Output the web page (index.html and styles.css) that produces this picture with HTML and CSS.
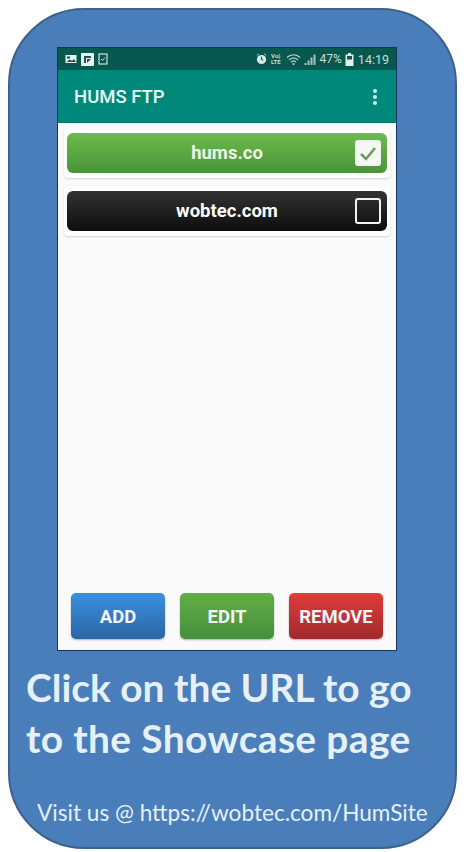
FILE: index.html
```html
<!DOCTYPE html>
<html lang="en">
<head>
<meta charset="utf-8">
<title>HUMS FTP</title>
<link rel="stylesheet" href="styles.css">
</head>
<body>
<main class="card">
  <section class="phone">
    <div class="status">
      <div class="status-group">
        <svg class="ic" width="12" height="10" viewBox="0 0 12 10"><rect x="0.5" y="1" width="11" height="8" fill="#e3f0ec"/><rect x="2" y="2.5" width="3" height="2" fill="#0a5a50"/><path d="M1.5 8 5 5.5 7 7l2-2 2 3z" fill="#0a5a50"/></svg>
        <svg class="ic" width="13" height="13" viewBox="0 0 13 13"><rect width="13" height="13" rx="1" fill="#e9f3f0"/><path d="M3 3h7v2H5v5H3z" fill="#24544c"/><path d="M6 10V6h4z" fill="#24544c"/></svg>
        <svg class="ic" width="10" height="12" viewBox="0 0 10 12"><rect x="1" y="1" width="8" height="10" fill="none" stroke="#cfe3de" stroke-width="1.2"/><path d="M3 6l1.5 1.5L7 4.5" fill="none" stroke="#cfe3de"/></svg>
      </div>
      <div class="status-group right">
        <svg class="ic" width="11" height="12" viewBox="0 0 12 12"><circle cx="6" cy="6.5" r="5" fill="#dcebe7"/><path d="M6 3.5v3l2 1" fill="none" stroke="#0a5a50" stroke-width="1.2"/><path d="M1 2l2-1.500M11 2 9 .5" stroke="#dcebe7"/></svg>
        <span class="lte">Vo)<br>LTE</span>
        <svg class="ic wifi" width="15" height="11" viewBox="0 0 15 11"><path d="M1 3.500a9 9 0 0 1 13 0M3 6a6 6 0 0 1 9 0M5 8.200a3 3 0 0 1 5 0" fill="none" stroke="#c3dcd6" stroke-width="1.100"/><circle cx="7.500" cy="10" r="1" fill="#c3dcd6"/></svg>
        <svg class="ic" width="12" height="11" viewBox="0 0 11 11"><path d="M0 9h2v2H0zM3 6.500h2V11H3zM6 3.500h2V11H6zM9 .5h2V11H9z" fill="#9fc6bd"/></svg>
        <span class="pct">47%</span>
        <svg class="ic" width="9" height="13" viewBox="0 0 8 13"><path d="M2.500 0h3v1.500H8V13H0V1.500h2.500z" fill="#e3f0ec"/><rect x="1.500" y="3" width="5" height="3.500" fill="#0a5a50"/></svg>
        <span class="time">14:19</span>
      </div>
    </div>
    <header class="appbar">
      <h1 class="title">HUMS FTP</h1>
      <div class="menu"><i></i><i></i><i></i></div>
    </header>
    <div class="content">
      <ul class="list">
        <li class="row">
          <a class="site site-green"><span>hums.co</span>
            <span class="check checked"><svg width="18" height="15" viewBox="0 0 18 15"><path d="M2 8l5 5L16 2" fill="none" stroke="#6f9468" stroke-width="2.500"/></svg></span>
          </a>
        </li>
        <li class="row">
          <a class="site site-black"><span>wobtec.com</span><span class="check"></span></a>
        </li>
      </ul>
      <div class="actions">
        <button class="btn btn-blue">ADD</button>
        <button class="btn btn-green">EDIT</button>
        <button class="btn btn-red">REMOVE</button>
      </div>
    </div>
  </section>
  <p class="caption">Click on the URL to go<br><span class="caption-line">to the Showcase page</span></p>
  <p class="footer">Visit us @ https://wobtec.com/HumSite</p>
</main>
</body>
</html>
```
FILE: styles.css
```css
* { box-sizing: border-box; }
html, body { margin: 0; padding: 0; background: #fff; }
body { width: 464px; height: 852px; overflow: hidden; }

.card {
  margin: 8px 7px 0 8px;
  height: 841px;
  background: #4a7ebb;
  border: 2px solid #3c6289;
  border-radius: 76px;
  padding: 37px 60px 0 47px;
  font-family: Lato, "Open Sans", sans-serif;
}

.phone {
  width: 340px;
  height: 604px;
  display: flex;
  flex-direction: column;
  border: 1px solid #17365d;
  background: #fafafa;
  font-family: Roboto, sans-serif;
}

.status {
  height: 22px;
  flex: none;
  background: #07594f;
  display: flex;
  justify-content: space-between;
  align-items: center;
  padding: 0 7px;
  color: #c8deda;
}
.status-group { display: flex; align-items: center; gap: 4px; }
.status-group.right { gap: 3px; }
.ic { display: block; flex: none; }
.wifi { margin: 0 0 0 2px; }
.lte { font-size: 6px; line-height: 6px; font-weight: 700; text-align: center; margin-left: 1px; }
.pct { font-size: 12px; margin: 0 0 0 1px; }
.time { font-size: 12.500px; margin-left: 1px; }

.appbar {
  height: 53px;
  flex: none;
  background: #00897b;
  border-bottom: 1px solid #0b7468;
  display: flex;
  justify-content: space-between;
  align-items: center;
  padding: 2px 19px 0 16px;
}
.title {
  margin: 0;
  font-size: 18.500px;
  font-weight: 500;
  color: #e6fbf8;
}
.menu { display: flex; flex-direction: column; gap: 2px; }
.menu i { display: block; width: 4px; height: 4px; border-radius: 50%; background: #c8f4ef; }

.content { flex: 1; display: flex; flex-direction: column; justify-content: space-between; min-height: 0; }
.list { list-style: none; margin: 0; padding: 5px 6px 0 6px; }
.row {
  padding: 5px 3px;
  margin-bottom: 8px;
  background: #fff;
  border-radius: 4px;
  box-shadow: 0 1px 2px rgba(0, 0, 0, .16);
}
.site {
  height: 40px;
  border-radius: 6px;
  position: relative;
  display: flex;
  align-items: center;
  justify-content: center;
  font-size: 18.500px;
  font-weight: 700;
  color: #fff;
}
.site-green { background: linear-gradient(#6cbb4c, #4a933b); color: #eef6e8; }
.site-black { background: linear-gradient(#333, #0d0d0d); }
.check {
  position: absolute;
  right: 6px;
  top: 7px;
  width: 26px;
  height: 26px;
  border: 2.500px solid #f2f2f2;
  border-radius: 3px;
  display: flex;
  align-items: center;
  justify-content: center;
}
.checked { background: #f3f8f0; }

.actions { display: flex; justify-content: space-between; padding: 0 13px 11px 13px; }
.btn {
  height: 46px;
  width: 94px;
  border: 0;
  border-radius: 5px;
  font-family: Roboto, sans-serif;
  font-size: 18.500px;
  font-weight: 700;
  color: #f1f5f7;
  padding: 1px 0 0;
  box-shadow: 0 1px 2px rgba(0, 0, 0, .3);
}
.btn-blue { background: linear-gradient(#3b90de, #2a66a6); }
.btn-green { background: linear-gradient(#63ae48, #468f3c); }
.btn-red { background: linear-gradient(#e03c3a, #a32a2b); }

.caption {
  margin: 11px 0 0 -31px;
  width: 420px;
  font-size: 38.900px;
  line-height: 51px;
  font-weight: 700;
  color: #e6f0f9;
  white-space: nowrap;
}
.caption-line { letter-spacing: .37px; }
.footer {
  margin: 34px 0 0 -20px;
  width: 420px;
  font-size: 22.600px;
  line-height: 30px;
  color: #e6f0f9;
  white-space: nowrap;
}
```
